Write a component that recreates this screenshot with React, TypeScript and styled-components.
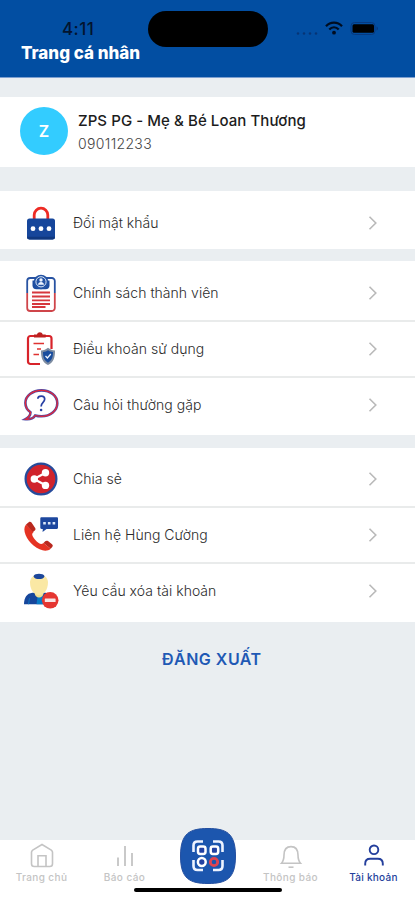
import React from "react";
import styled, { createGlobalStyle } from "styled-components";

const Global = createGlobalStyle`
  * { box-sizing: border-box; }
  html, body { margin: 0; padding: 0; }
  body { font-family: Inter, "Liberation Sans", sans-serif; background: #eaeef1; }
  svg { display: block; flex: none; overflow: visible; }
`;

const Screen = styled.div`
  width: 415px;
  height: 900px;
  background: #eaeef1;
  display: flex;
  flex-direction: column;
  overflow: hidden;
`;

const Header = styled.header`
  height: 78px;
  flex: none;
  background: #024ea2;
  border-bottom: 1px solid #7d9fd0;
`;

const StatusBar = styled.div`
  height: 42px;
  padding: 11px 36px 0 62px;
  display: flex;
  align-items: flex-start;
`;

const Clock = styled.div`
  width: 86px;
  padding-top: 8px;
  font-size: 17px;
  line-height: 20px;
  font-weight: 500;
  letter-spacing: 0.45px;
  color: #03142f;
`;

const Island = styled.div`
  width: 120px;
  height: 36px;
  border-radius: 18px;
  background: #000;
`;

const StatusIcons = styled.div`
  margin-left: auto;
  padding-top: 9px;
  display: flex;
  gap: 7px;
`;

const Title = styled.h1`
  margin: 0 0 0 21px;
  font-size: 17px;
  line-height: 22px;
  font-weight: 800;
  letter-spacing: 0;
  color: #fff;
`;

const Profile = styled.section`
  margin-top: 19px;
  height: 70px;
  flex: none;
  background: #fff;
  display: flex;
  align-items: center;
  padding: 0 20px 2px;
  gap: 10px;
`;

const Avatar = styled.div`
  width: 48px;
  height: 48px;
  border-radius: 50%;
  background: #33ccff;
  color: #fff;
  display: grid;
  place-items: center;
  font-size: 16px;
  font-weight: 600;
`;

const ProfileText = styled.div`
  padding-top: 3px;
`;

const Name = styled.div`
  font-size: 15px;
  line-height: 22px;
  font-weight: 500;
  letter-spacing: 0.07px;
  color: #1c1c1c;
  white-space: nowrap;
`;

const Phone = styled.div`
  font-size: 14px;
  line-height: 23px;
  font-weight: 300;
  letter-spacing: 0.35px;
  color: #444;
`;

const Group = styled.section<{ $h: number; $gap: number; $top: number }>`
  height: ${(p) => p.$h}px;
  margin-top: ${(p) => p.$gap}px;
  padding-top: ${(p) => p.$top}px;
  flex: none;
  background: #fff;
`;

const Row = styled.div`
  height: 56px;
  display: flex;
  align-items: center;
  padding: 0 37px 0 21px;
  border-bottom: 2px solid #e9ebeb;
  &:last-child { border-bottom-color: transparent; }
`;

const IconSlot = styled.div`
  width: 40px;
  display: grid;
  place-items: center;
`;

const Label = styled.span`
  margin-left: 12px;
  flex: 1;
  font-size: 14px;
  line-height: 20px;
  font-weight: 300;
  letter-spacing: 0.03px;
  color: #2c2c2c;
  white-space: nowrap;
`;

const Logout = styled.button`
  margin: 26px 0 0 162px;
  align-self: flex-start;
  padding: 0;
  border: 0;
  background: none;
  font: 600 16px/22px Inter, sans-serif;
  letter-spacing: 0.5px;
  color: #1f59b5;
`;

const TabBar = styled.nav`
  margin-top: auto;
  height: 60px;
  flex: none;
  position: relative;
  background: #fff;
  display: grid;
  grid-template-columns: repeat(5, 83px);
`;

const Tab = styled.div<{ $active?: boolean }>`
  display: flex;
  flex-direction: column;
  align-items: center;
  padding-top: 2px;
  gap: 2px;
  color: ${(p) => (p.$active ? "#243f9c" : "#c4c4c4")};
  font-size: 10px;
  line-height: 14px;
  font-weight: 500;
  letter-spacing: ${(p) => (p.$active ? 0.25 : 0.4)}px;
  white-space: nowrap;
`;

const ScanButton = styled.div`
  width: 56px;
  height: 56px;
  margin: -12px auto 0;
`;

const HomeIndicator = styled.div`
  position: absolute;
  left: 134px;
  bottom: 8px;
  width: 148px;
  height: 4px;
  border-radius: 2px;
  background: #000;
`;

const BLUE = "#16469b";

const Chevron = () => (
  <svg width="10" height="16" viewBox="0 0 10 16" fill="none" stroke="#b9b9b9" strokeWidth="1.6">
    <path d="M1.5 1.7 7.8 8 1.5 14.3" />
  </svg>
);

const LockIcon = () => (
  <svg width="30" height="34" viewBox="0 0 30 34">
    <path d="M8.2 14V9a6.8 6.8 0 0 1 13.6 0v5" fill="none" stroke="#ee2b24" strokeWidth="2.8" />
    <rect x="1" y="12.6" width="28" height="20.8" rx="2.5" fill={BLUE} />
    <path d="M1 30.7h28v.3a2.4 2.4 0 0 1-2.4 2.4H3.4A2.4 2.4 0 0 1 1 31z" fill="#10387f" />
    <circle cx="7" cy="22.7" r="2.4" fill="#fff" />
    <circle cx="15" cy="22.7" r="2.4" fill="#fff" />
    <circle cx="23" cy="22.7" r="2.4" fill="#fff" />
  </svg>
);

const PolicyIcon = () => (
  <svg width="30" height="38" viewBox="0 0 30 38" fill="none">
    <path d="M1.2 19V7a3 3 0 0 1 3-3h21.6a3 3 0 0 1 3 3v12" stroke="#2853a2" strokeWidth="1.8" />
    <path d="M1.2 19v15a3 3 0 0 0 3 3h21.6a3 3 0 0 0 3-3V19" stroke="#cf454a" strokeWidth="1.8" />
    <path d="M6.500 6.500h17v4.800a4 4 0 0 1-4 4h-9a4 4 0 0 1-4-4z" fill="#1c4c9f" />
    <circle cx="15" cy="8" r="7.300" fill="#2353a4" />
    <circle cx="15" cy="7.8" r="5.1" stroke="#dbe7f7" strokeWidth="1" />
    <circle cx="15" cy="6" r="1.7" fill="#eef4ff" />
    <path d="M12 10.800c.3-3.600 5.700-3.600 6 0z" fill="#eef4ff" />
    <path d="M6 18.5h18M6 22.5h18M6 26.3h18M6 30h18M6 33h13.5" stroke="#d6373d" strokeWidth="1.8" />
  </svg>
);

const TermsIcon = () => (
  <svg width="28" height="34" viewBox="0 0 28 34" fill="none">
    <path d="M13 32H3.500a2.500 2.500 0 0 1-2.500-2.500V6.500A2.500 2.500 0 0 1 3.500 4H22a2.500 2.500 0 0 1 2.500 2.500V17" stroke="#d8232a" strokeWidth="2.2" />
    <path d="M7 5.600V2.500h3c.7-3 5-3 5.700 0h3v3.100z" fill="#bd2020" />
    <path d="M6.5 11.5H17M10 17h4M6.500 22.5H12" stroke="#df3331" strokeWidth="1.6" />
    <path d="M14 18.5c3-.3 5-1 7-2.7 2 1.700 4 2.400 7 2.700.2 7-1.600 12-7 14.500-5.400-2.500-7.200-7.500-7-14.500z" fill="#7d8ca1" />
    <path d="M16 20c2-.2 3.500-.8 5-1.800 1.500 1 3 1.600 5 1.800 0 5.500-1.200 8.500-5 10.700-3.800-2.200-5-5.200-5-10.700z" fill="#194d9e" />
    <path d="m18.500 24 1.900 2 3.400-4" stroke="#eef4ff" strokeWidth="1.300" />
  </svg>
);

const BUBBLE =
  "M18.5 1.4C9.4 1.4 2.400 6.900 2.400 14c0 3.800 2 7.100 5.100 9.300 0 3-1.700 5.100-5 6.900 4.900.5 8-1.200 9.700-3.700 2 .6 4 .8 6.300.8 9 0 15.800-5.800 15.800-13.100S27.500 1.400 18.500 1.400Z";

const QuestionIcon = () => (
  <svg width="36" height="32" viewBox="0 0 36 32" fill="none">
    <path d={BUBBLE} stroke="#4f4aa6" strokeWidth="2.600" />
    <path d={BUBBLE} stroke="#e0283a" strokeWidth="1.300" />
    <path d="M14.800 9.800c.2-3.500 6.900-3.500 6.900.3 0 3.300-3.600 3.200-3.600 7.400" stroke="#2840a4" strokeWidth="1.700" />
    <circle cx="18.100" cy="21" r="1.300" fill="#2840a4" />
  </svg>
);

const ShareIcon = () => (
  <svg width="34" height="34" viewBox="0 0 34 34">
    <circle cx="17" cy="17" r="15.400" fill="#d0232c" stroke="#274b9b" strokeWidth="2.200" />
    <path d="M22 10.500 10 17l12 6.500" fill="none" stroke="#fff" strokeWidth="2.200" />
    <circle cx="21.500" cy="10.800" r="3.700" fill="#fff" />
    <circle cx="10.300" cy="17" r="3.700" fill="#fff" />
    <circle cx="21.500" cy="23.400" r="3.700" fill="#fff" />
  </svg>
);

const ContactIcon = () => (
  <svg width="34" height="36" viewBox="0 0 34 36">
    <path d="M2 7.500C-2.500 13 3 23 9.500 28.500c6.500 5 12.800 7 17.200 3.200L19.500 26c-1.600 1.500-3 1.400-4.800.1-2.300-1.800-4.600-4.300-6-6.900-.8-1.500-.8-2.800 1-4.200z" fill="#e53323" />
    <path d="m2 7.500 2.700-2.200c1-.8 2-.6 2.800.3L11 10.700c.8 1.100.6 2-.2 2.800L8.900 15z" fill="#b9281e" />
    <path d="m19.500 26 1.700-1.700c.8-.8 1.800-.9 2.800-.2l4 3.100c1 .8 1 1.900.2 2.800l-1.500 1.700z" fill="#b9281e" />
    <path d="M17.500 0.300h15.300c.7 0 1.200.5 1.200 1.200v9.200c0 .7-.5 1.200-1.200 1.200H22.500L18.600 15l.2-3.100h-1.300c-.7 0-1.200-.5-1.200-1.200V1.500c0-.7.500-1.200 1.200-1.200z" fill="#1d479e" />
    <path d="M19.200 5h2.600v2.600h-2.600zM23.900 5h2.600v2.600h-2.600zM28.600 5h2.600v2.600h-2.600z" fill="#dce8f8" />
  </svg>
);

const DeleteIcon = () => (
  <svg width="36" height="36" viewBox="0 0 36 36">
    <path d="M1 31.300c0-6.300 2.700-11 8.500-11.500h13c5.800.5 8.500 5.200 8.500 11.500z" fill={BLUE} />
    <path d="m5.500 31.300 1-6" stroke="#0b7cc7" strokeWidth=".8" />
    <path d="m13.500 31.300 1-7.300 4-2 3 2v7.300z" fill="#087bc6" />
    <path d="M11.700 15h8.800v5.300c0 2.500-2 4.300-4.400 4.300s-4.400-1.800-4.400-4.300z" fill="#f2df91" />
    <path d="M7 9.300C7 4.500 11 1.400 16 1.400s9 3.100 9 7.900c0 8-4.200 12.700-9 12.700S7 17.300 7 9.300z" fill="#fae8a4" />
    <path d="M10.500 3.200c1.200-3.200 9.800-3.200 11 0-.6 3.800-10.400 3.800-11 0z" fill="#1c479b" />
    <circle cx="27.200" cy="27.300" r="8.300" fill="#e53631" />
    <rect x="21.800" y="25.500" width="10.800" height="3.600" rx=".6" fill="#f9e4e4" />
  </svg>
);

const HomeIcon = () => (
  <svg width="24" height="26" viewBox="0 0 24 26" fill="none" stroke="currentColor" strokeWidth="1.600">
    <path d="M1.500 10.200a3 3 0 0 1 1.200-2.100L12 2.500l9.300 5.600a3 3 0 0 1 1.200 2.100v11.600a2.700 2.700 0 0 1-2.700 2.700H4.200a2.700 2.700 0 0 1-2.700-2.700z" />
    <path d="M8 24.500V13.800h8v10.700" />
  </svg>
);

const ChartIcon = () => (
  <svg width="24" height="26" viewBox="0 0 24 26" fill="none" stroke="currentColor" strokeWidth="1.800">
    <path d="M5 15.500V24M12 4v20M19 11v13" />
  </svg>
);

const BellIcon = () => (
  <svg width="24" height="26" viewBox="0 0 24 26" fill="none" stroke="currentColor" strokeWidth="1.600">
    <path d="M2.500 21.300c2.200-2.400 2.500-4.900 2.500-8.200 0-5.400 2.400-8.500 7-8.500s7 3.100 7 8.500c0 3.300.3 5.800 2.500 8.200z" />
    <path d="M9.500 25.200h5" />
  </svg>
);

const UserIcon = () => (
  <svg width="24" height="26" viewBox="0 0 24 26" fill="none" stroke="currentColor" strokeWidth="1.900">
    <circle cx="12" cy="7.800" r="4.300" />
    <path d="M3.200 23.500v-1.700c0-3.300 2-5 5-5h7.600c3 0 5 1.700 5 5v1.700" />
  </svg>
);

const ScanIcon = () => (
  <svg width="56" height="56" viewBox="0 0 56 56" fill="none">
    <path d="M28 .5C46 .5 55.500 5 55.500 28S46 55.500 28 55.500.5 51 .5 28 10 .5 28 .5Z" fill="#1c56ae" stroke="#244fa0" />
    <path d="M13.500 24v-6.500c0-2.500 1.500-4 4-4h5.500M33 13.500h5.500c2.500 0 4 1.500 4 4V24M42.500 32v6c0 2.500-1.500 4-4 4H33M23 42h-5.500c-2.500 0-4-1.500-4-4v-6" stroke="#edf3ff" strokeWidth="2.600" />
    <rect x="18" y="18.500" width="7.500" height="7.500" rx="2.200" fill="#2342a2" stroke="#fff" strokeWidth="2.500" />
    <rect x="30.700" y="18.500" width="7.500" height="7.500" rx="2.200" fill="#2342a2" stroke="#fff" strokeWidth="2.500" />
    <circle cx="21.800" cy="34" r="3.900" fill="#2342a2" stroke="#fff" strokeWidth="2.500" />
    <circle cx="34" cy="34" r="3.700" stroke="#e04450" strokeWidth="2.800" />
  </svg>
);

type Item = { icon: React.ReactNode; text: string };

const groups: { h: number; gap: number; top: number; items: Item[] }[] = [
  { h: 58, gap: 24, top: 5, items: [{ icon: <LockIcon />, text: "Đổi mật khẩu" }] },
  {
    h: 174, gap: 12, top: 5,
    items: [
      { icon: <PolicyIcon />, text: "Chính sách thành viên" },
      { icon: <TermsIcon />, text: "Điều khoản sử dụng" },
      { icon: <QuestionIcon />, text: "Câu hỏi thường gặp" },
    ],
  },
  {
    h: 174, gap: 13, top: 4,
    items: [
      { icon: <ShareIcon />, text: "Chia sẻ" },
      { icon: <ContactIcon />, text: "Liên hệ Hùng Cường" },
      { icon: <DeleteIcon />, text: "Yêu cầu xóa tài khoản" },
    ],
  },
];

export default function App() {
  return (
    <Screen>
      <Global />
      <Header>
        <StatusBar>
          <Clock>4:11</Clock>
          <Island />
          <StatusIcons>
            <svg width="22" height="16" viewBox="0 0 22 16" fill="#073474">
              <circle cx="2" cy="13.500" r="1.200" />
              <circle cx="8" cy="13.500" r="1.200" />
              <circle cx="14" cy="13.500" r="1.200" />
              <circle cx="20" cy="13.500" r="1.200" />
            </svg>
            <svg width="18" height="16" viewBox="0 0 18 16" fill="none" stroke="#000d20" strokeWidth="2.200">
              <path d="M1 6.200c4.400-4.900 11.600-4.900 16 0M4.300 9.400c2.600-2.900 6.800-2.900 9.400 0" />
              <circle cx="9" cy="12.700" r="1.900" fill="#000d20" stroke="none" />
            </svg>
            <svg width="29" height="16" viewBox="0 0 29 16">
              <rect x="1" y="2.500" width="24" height="12" rx="3.500" fill="none" stroke="#07397f" />
              <rect x="2.500" y="4.200" width="21.500" height="8.600" rx="1.500" fill="#000" />
              <path d="M26.500 6.500c2 .7 2 3.300 0 4z" fill="#07397f" />
            </svg>
          </StatusIcons>
        </StatusBar>
        <Title>Trang cá nhân</Title>
      </Header>
      <Profile>
        <Avatar>Z</Avatar>
        <ProfileText>
          <Name>ZPS PG - Mẹ &amp; Bé Loan Thương</Name>
          <Phone>090112233</Phone>
        </ProfileText>
      </Profile>
      {groups.map((g, i) => (
        <Group key={i} $h={g.h} $gap={g.gap} $top={g.top}>
          {g.items.map((it) => (
            <Row key={it.text}>
              <IconSlot>{it.icon}</IconSlot>
              <Label>{it.text}</Label>
              <Chevron />
            </Row>
          ))}
        </Group>
      ))}
      <Logout>ĐĂNG XUẤT</Logout>
      <TabBar>
        <Tab><HomeIcon />Trang chủ</Tab>
        <Tab><ChartIcon />Báo cáo</Tab>
        <ScanButton><ScanIcon /></ScanButton>
        <Tab><BellIcon />Thông báo</Tab>
        <Tab $active><UserIcon />Tài khoản</Tab>
        <HomeIndicator />
      </TabBar>
    </Screen>
  );
}
